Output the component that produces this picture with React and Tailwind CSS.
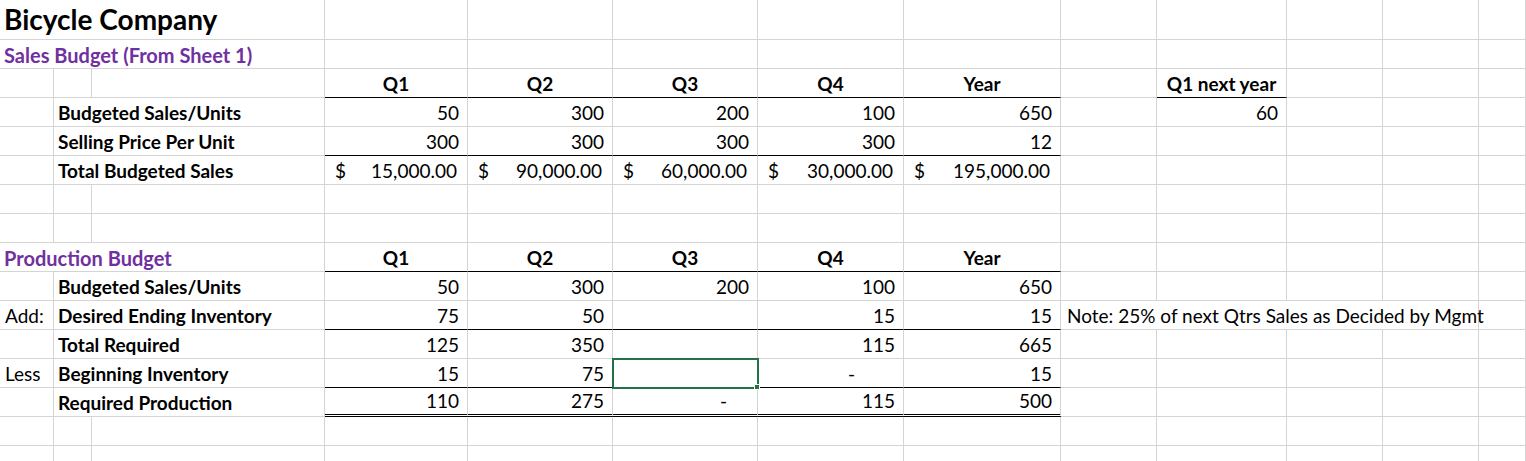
import React from 'react';

const widths = [54, 38, 233, 143, 145, 145, 146, 157, 96, 130, 96, 96, 47];

const Cell = ({ span = 1, children, className = '' }) => (
  <div
    className={`flex items-end pb-[1px] px-[8px] whitespace-nowrap leading-[24px] border-r border-b border-[#d4d4d4] ${className}`}
    style={{ gridColumn: `span ${span} / span ${span}` }}
  >
    {children}
  </div>
);

const Empty = ({ n = 1, first = 0 }) =>
  Array.from({ length: n }).map((_, i) => <Cell key={'e' + first + i} />);

const Num = ({ v, className = '' }) => (
  <Cell className={`justify-end ${className}`}>{v}</Cell>
);

const Money = ({ v, className = '' }) => (
  <Cell className={`justify-between pl-[10px] pr-[10px] ${className}`}>
    <span>$</span>
    <span>{v}</span>
  </Cell>
);

const Head = ({ v, className = 'border-b-black' }) => (
  <Cell className={`justify-center font-bold ${className}`}>{v}</Cell>
);

const Label = ({ v, left = '' }) => (
  <>
    <Cell className="pl-[5px]">{left}</Cell>
    <Cell span={2} className="pl-[4px] font-bold">{v}</Cell>
  </>
);

export default function App() {
  const bk = 'border-b-black';
  const dbl = 'border-b-[3px] border-b-black border-double';
  return (
    <div className="w-[1526px] h-[461px] overflow-hidden bg-white text-[19px] text-black" style={{ fontFamily: 'Lato, "Open Sans", sans-serif' }}>
      <div
        className="grid auto-rows-[29px]"
        style={{ gridTemplateColumns: widths.map((w) => w + 'px').join(' '), gridTemplateRows: '40px' }}
      >
        {/* row 1 */}
        <Cell span={3} className="pl-[4px] pb-[3px] text-[28px] leading-[34px] font-bold">Bicycle Company</Cell>
        <Empty n={10} />
        {/* row 2 */}
        <Cell span={3} className="pl-[4px] font-bold text-[#7030a0] text-[20px]">Sales Budget (From Sheet 1)</Cell>
        <Empty n={10} />
        {/* row 3 */}
        <Empty n={3} />
        <Head v="Q1" /><Head v="Q2" /><Head v="Q3" /><Head v="Q4" /><Head v="Year" />
        <Cell />
        <Head v="Q1 next year" />
        <Empty n={3} first={1} />
        {/* row 4 */}
        <Label v="Budgeted Sales/Units" />
        <Num v="50" /><Num v="300" /><Num v="200" /><Num v="100" /><Num v="650" />
        <Cell /><Num v="60" /><Empty n={3} />
        {/* row 5 */}
        <Label v="Selling Price Per Unit" />
        <Num v="300" className={bk} /><Num v="300" className={bk} /><Num v="300" className={bk} /><Num v="300" className={bk} /><Num v="12" className={bk} />
        <Empty n={5} />
        {/* row 6 */}
        <Label v="Total Budgeted Sales" />
        <Money v="15,000.00" /><Money v="90,000.00" /><Money v="60,000.00" /><Money v="30,000.00" /><Money v="195,000.00" />
        <Empty n={5} />
        {/* rows 7,8 */}
        <Empty n={13} />
        <Empty n={13} first={2} />
        {/* row 9 */}
        <Cell span={3} className="pl-[4px] font-bold text-[#7030a0] text-[20px]">Production Budget</Cell>
        <Head v="Q1" /><Head v="Q2" /><Head v="Q3" /><Head v="Q4" /><Head v="Year" />
        <Empty n={5} />
        {/* row 10 */}
        <Label v="Budgeted Sales/Units" />
        <Num v="50" /><Num v="300" /><Num v="200" /><Num v="100" /><Num v="650" />
        <Empty n={5} />
        {/* row 11 */}
        <Label left="Add:" v="Desired Ending Inventory" />
        <Num v="75" className={bk} /><Num v="50" className={bk} /><Cell className={bk} /><Num v="15" className={bk} /><Num v="15" className={bk} />
        <Cell span={4} className="pl-[6px]">Note: 25% of next Qtrs Sales as Decided by Mgmt</Cell>
        <Cell />
        {/* row 12 */}
        <Label v="Total Required" />
        <Num v="125" /><Num v="350" /><Cell /><Num v="115" /><Num v="665" />
        <Empty n={5} />
        {/* row 13 */}
        <Label left="Less" v="Beginning Inventory" />
        <Num v="15" className={bk} /><Num v="75" className={bk} />
        <div className="relative border-r border-b border-b-black border-[#d4d4d4]">
          <div className="absolute -left-[1px] -top-[1px] w-[147px] h-[31px] border-2 border-[#217346]" />
          <div className="absolute -right-[3px] -bottom-[3px] w-[6px] h-[6px] bg-[#217346] border border-white" />
        </div>
        <Cell className={`justify-center pl-[50px] ${bk}`}>-</Cell>
        <Num v="15" className={bk} />
        <Empty n={5} />
        {/* row 14 */}
        <Label v="Required Production" />
        <Num v="110" className={dbl} />
        <Num v="275" className={dbl} />
        <Cell className={`justify-end pr-[30px] ${dbl}`}>-</Cell>
        <Num v="115" className={dbl} />
        <Num v="500" className={dbl} />
        <Empty n={5} />
        {/* rows 15,16 */}
        <Empty n={13} first={3} />
        <Empty n={13} first={4} />
      </div>
    </div>
  );
}
